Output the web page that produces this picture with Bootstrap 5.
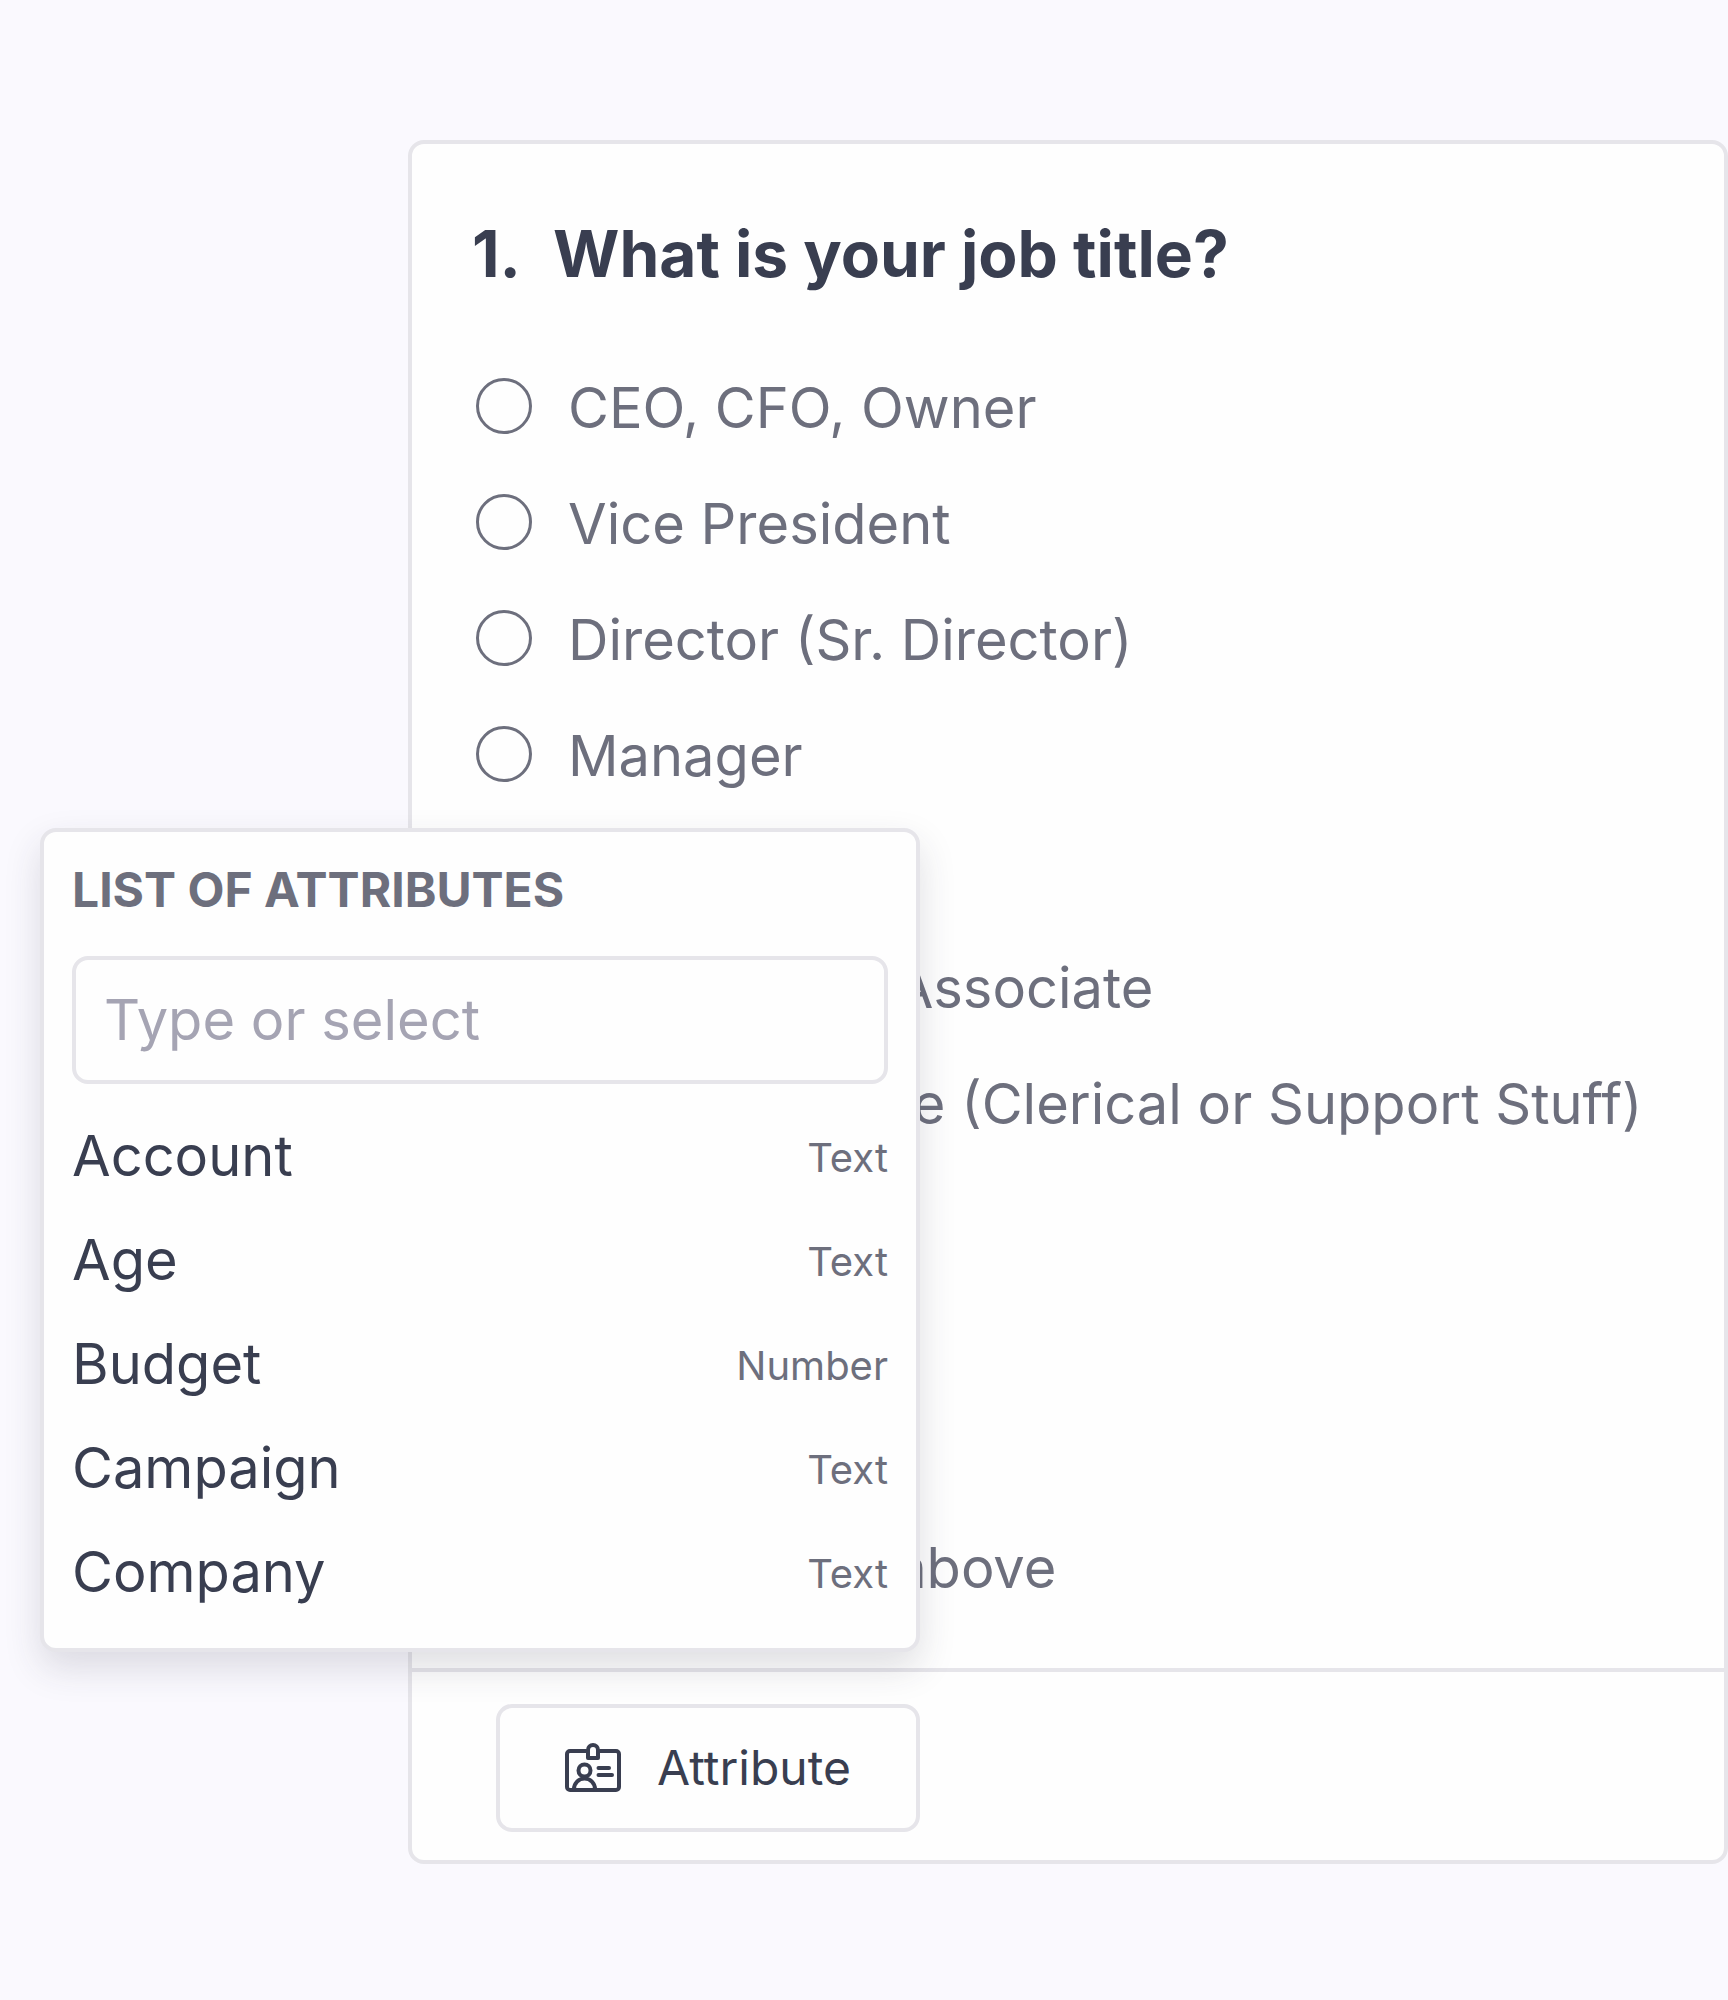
<!DOCTYPE html>
<html lang="en">
<head>
<meta charset="utf-8">
<meta name="viewport" content="width=device-width, initial-scale=1">
<title>Survey question</title>
<link href="https://cdn.jsdelivr.net/npm/bootstrap@5.3.0/dist/css/bootstrap.min.css" rel="stylesheet">
<style>
  :root { --ink: #393e50; --soft: #6d6f7d; --line: #e6e5ea; }
  body { background: #faf9fe; font-family: Inter, "Liberation Sans", sans-serif; color: var(--ink); }
  .survey-page { padding: 140px 0 136px 408px; }
  .question-card { border: 4px solid var(--line); border-radius: 16px; background: #fefefe; }
  .question-body { padding: 70px 60px 42px; }
  .question-title { font-size: 64px; line-height: 80px; font-weight: 700; margin-bottom: 56px; gap: 32px; }
  .option-row { height: 116px; gap: 36px; color: var(--soft); font-size: 56px; line-height: 72px; }
  .option-row .form-check-input { width: 56px; height: 56px; margin: 0 0 4px 4px; border: 3px solid var(--soft); background-color: transparent; flex: none; }
  .question-footer { border-top: 4px solid var(--line); padding: 32px 84px 28px; }
  .attr-btn { width: 424px; height: 128px; border: 4px solid var(--line); border-radius: 16px; background: #fefefe; color: var(--ink); font-size: 48px; line-height: 64px; gap: 36px; }
  .attr-menu { position: absolute; right: 0; bottom: 100%; width: 880px; margin-bottom: 52px; padding: 30px 28px 24px; border: 4px solid var(--line); border-radius: 16px; background: #fefefe; box-shadow: 0 16px 36px rgba(50, 46, 66, .15); }
  .attr-title { font-size: 48px; line-height: 56px; font-weight: 700; color: var(--soft); margin-bottom: 38px; }
  .attr-search { height: 128px; padding: 0 28px; border: 4px solid var(--line); border-radius: 16px; background: #fefefe; font-size: 56px; color: var(--ink); }
  .attr-search::placeholder { color: #a5a4b3; opacity: 1; }
  .attr-list { margin-top: 20px; }
  .attr-item { height: 104px; padding: 0; border: 0; background: transparent; color: var(--ink); font-size: 56px; line-height: 72px; }
  .attr-kind { color: var(--soft); font-size: 40px; padding-top: 4px; }
</style>
</head>
<body>
<main class="survey-page">
  <section class="question-card">
    <div class="question-body">
      <h1 class="question-title d-flex"><span>1.</span><span id="q1">What is your job title?</span></h1>
      <div role="radiogroup" aria-labelledby="q1">
        <div class="option-row d-flex align-items-center"><input class="form-check-input" type="radio" name="job" id="o1"><label for="o1">CEO, CFO, Owner</label></div>
        <div class="option-row d-flex align-items-center"><input class="form-check-input" type="radio" name="job" id="o2"><label for="o2">Vice President</label></div>
        <div class="option-row d-flex align-items-center"><input class="form-check-input" type="radio" name="job" id="o3"><label for="o3">Director (Sr. Director)</label></div>
        <div class="option-row d-flex align-items-center"><input class="form-check-input" type="radio" name="job" id="o4"><label for="o4">Manager</label></div>
        <div class="option-row d-flex align-items-center"><input class="form-check-input" type="radio" name="job" id="o5"><label for="o5">Supervisor</label></div>
        <div class="option-row d-flex align-items-center"><input class="form-check-input" type="radio" name="job" id="o6"><label for="o6">Analyst and Associate</label></div>
        <div class="option-row d-flex align-items-center"><input class="form-check-input" type="radio" name="job" id="o7"><label for="o7">Administrative (Clerical or Support Stuff)</label></div>
        <div class="option-row d-flex align-items-center"><input class="form-check-input" type="radio" name="job" id="o8"><label for="o8">Consultant</label></div>
        <div class="option-row d-flex align-items-center"><input class="form-check-input" type="radio" name="job" id="o9"><label for="o9">Intern</label></div>
        <div class="option-row d-flex align-items-center"><input class="form-check-input" type="radio" name="job" id="o10"><label for="o10">Student</label></div>
        <div class="option-row d-flex align-items-center"><input class="form-check-input" type="radio" name="job" id="o11"><label for="o11">None of the above</label></div>
      </div>
    </div>
    <div class="question-footer d-flex">
      <div class="position-relative">
        <button type="button" class="attr-btn btn d-flex align-items-center justify-content-center" aria-expanded="true" aria-controls="attrMenu">
          <svg width="56" height="56" viewBox="0 0 56 56" fill="none" stroke="currentColor" stroke-width="4" stroke-linecap="round" stroke-linejoin="round" aria-hidden="true">
            <path d="M21 11H5a3 3 0 0 0-3 3v33a3 3 0 0 0 3 3h46a3 3 0 0 0 3-3V14a3 3 0 0 0-3-3H35"/>
            <path d="M23 18v-8a5 5 0 0 1 10 0v8z"/>
            <circle cx="19.500" cy="30.500" r="6"/>
            <path d="M9 49a10.500 10.500 0 0 1 21 0"/>
            <path d="M33.500 28H44M33.500 35H47"/>
          </svg>
          <span>Attribute</span>
        </button>
        <div class="attr-menu" id="attrMenu">
          <label class="attr-title d-block" for="attrSearch">LIST OF ATTRIBUTES</label>
          <input class="attr-search form-control" type="text" id="attrSearch" placeholder="Type or select">
          <div class="attr-list">
            <button type="button" class="attr-item d-flex w-100 align-items-center justify-content-between"><span>Account</span><span class="attr-kind">Text</span></button>
            <button type="button" class="attr-item d-flex w-100 align-items-center justify-content-between"><span>Age</span><span class="attr-kind">Text</span></button>
            <button type="button" class="attr-item d-flex w-100 align-items-center justify-content-between"><span>Budget</span><span class="attr-kind">Number</span></button>
            <button type="button" class="attr-item d-flex w-100 align-items-center justify-content-between"><span>Campaign</span><span class="attr-kind">Text</span></button>
            <button type="button" class="attr-item d-flex w-100 align-items-center justify-content-between"><span>Company</span><span class="attr-kind">Text</span></button>
          </div>
        </div>
      </div>
    </div>
  </section>
</main>
<script src="https://cdn.jsdelivr.net/npm/bootstrap@5.3.0/dist/js/bootstrap.bundle.min.js"></script>
</body>
</html>
